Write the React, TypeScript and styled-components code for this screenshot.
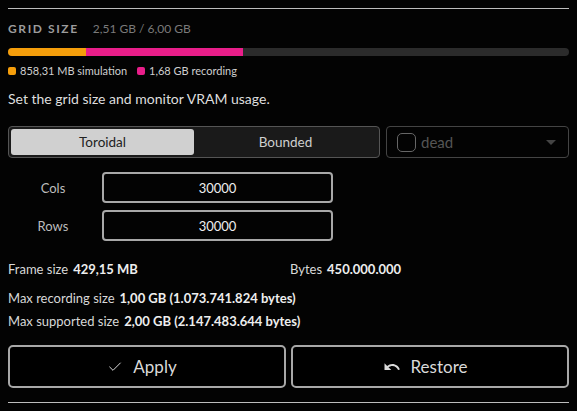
import styled, { createGlobalStyle } from "styled-components";
import { Check } from "lucide-react";
import { MdUndo } from "react-icons/md";

const Global = createGlobalStyle`
  html, body {
    margin: 0;
    background: #030303;
    font-family: "Lato", "Noto Sans", sans-serif;
    color: #dcdcdc;
  }
`;

const Panel = styled.div`
  width: 561px;
  padding: 8px 8px 0;
`;

const Rule = styled.div`
  height: 1px;
  background: #bdbdbd;
`;

const Header = styled.div`
  display: flex;
  align-items: baseline;
  gap: 14px;
  margin-top: 12px;
  height: 14px;
`;

const Title = styled.span`
  font-size: 12px;
  font-weight: 700;
  letter-spacing: 1.6px;
  color: #9c9c9c;
`;

const Usage = styled.span`
  font-size: 12px;
  color: #7a7a7a;
`;

const Bar = styled.div`
  display: flex;
  height: 8px;
  margin-top: 13px;
  border-radius: 4px;
  overflow: hidden;
  background: #2b2b2b;
`;

const Segment = styled.div<{ $color: string; $w: number }>`
  width: ${(p) => p.$w}px;
  background: ${(p) => p.$color};
`;

const Legend = styled.div`
  display: flex;
  gap: 10px;
  margin-top: 8px;
  font-size: 11px;
  color: #cfcfcf;
`;

const LegendItem = styled.span`
  display: flex;
  align-items: center;
  gap: 4px;
`;

const Swatch = styled.span<{ $color: string }>`
  width: 8px;
  height: 8px;
  border-radius: 2px;
  background: ${(p) => p.$color};
`;

const Description = styled.p`
  margin: 13px 0 0;
  font-size: 14px;
  color: #dedede;
`;

const ModeRow = styled.div`
  display: flex;
  gap: 6px;
  margin-top: 19px;
`;

const Segmented = styled.div`
  display: flex;
  width: 366px;
  height: 26px;
  padding: 2px;
  border: 1px solid #555;
  border-radius: 4px;
  background: #1a1a1a;
`;

const SegButton = styled.div<{ $active?: boolean }>`
  flex: 1;
  display: flex;
  align-items: center;
  justify-content: center;
  font-size: 13.5px;
  border-radius: 3px;
  background: ${(p) => (p.$active ? "#d0d0d0" : "transparent")};
  color: ${(p) => (p.$active ? "#222" : "#cfcfcf")};
`;

const Select = styled.div`
  flex: 1;
  display: flex;
  align-items: center;
  gap: 5px;
  padding: 0 10px;
  border: 1px solid #444;
  border-radius: 4px;
`;

const Box = styled.span`
  width: 17px;
  height: 17px;
  border: 1px solid #666;
  border-radius: 5px;
`;

const Placeholder = styled.span`
  flex: 1;
  font-size: 15px;
  color: #555;
`;

const Caret = styled.span`
  width: 0;
  height: 0;
  border-left: 5px solid transparent;
  border-right: 5px solid transparent;
  border-top: 5px solid #444;
  margin-right: 2px;
`;

const Fields = styled.div`
  display: grid;
  grid-template-columns: 90px 231px;
  column-gap: 4px;
  row-gap: 7px;
  margin-top: 14px;
  align-items: center;
`;

const FieldLabel = styled.span`
  text-align: center;
  font-size: 13px;
  color: #bdbdbd;
`;

const Input = styled.div`
  height: 27px;
  display: flex;
  align-items: center;
  justify-content: center;
  border: 2px solid #a8a8a8;
  border-radius: 4px;
  font-size: 13px;
  color: #efefef;
`;

const Stats = styled.div`
  display: grid;
  grid-template-columns: 282px 1fr;
  margin-top: 20px;
  font-size: 13px;
`;

const Info = styled.div<{ $gap?: number }>`
  margin-top: ${(p) => p.$gap ?? 0}px;
  font-size: 13px;
  color: #d8d8d8;
  white-space: nowrap;
`;

const Value = styled.b`
  font-weight: 700;
  color: #eee;
  margin-left: 5px;
`;

const Actions = styled.div`
  display: grid;
  grid-template-columns: 1fr 1fr;
  gap: 5px;
  margin-top: 16px;
`;

const ActionButton = styled.button`
  height: 43px;
  display: flex;
  align-items: center;
  justify-content: center;
  gap: 10px;
  padding: 0 10px 0 0;
  background: #000;
  border: 2px solid #a8a8a8;
  border-radius: 5px;
  color: #dadada;
  font-family: inherit;
  font-size: 17px;
`;

const BottomRule = styled(Rule)`
  margin-top: 14px;
`;

export default function App() {
  return (
    <Panel>
      <Global />
      <Rule />
      <Header>
        <Title>GRID SIZE</Title>
        <Usage>2,51 GB / 6,00 GB</Usage>
      </Header>
      <Bar>
        <Segment $color="#f59e0b" $w={78} />
        <Segment $color="#e91e8a" $w={157} />
      </Bar>
      <Legend>
        <LegendItem>
          <Swatch $color="#f59e0b" />
          858,31 MB simulation
        </LegendItem>
        <LegendItem>
          <Swatch $color="#e91e8a" />
          1,68 GB recording
        </LegendItem>
      </Legend>
      <Description>Set the grid size and monitor VRAM usage.</Description>
      <ModeRow>
        <Segmented>
          <SegButton $active>Toroidal</SegButton>
          <SegButton>Bounded</SegButton>
        </Segmented>
        <Select>
          <Box />
          <Placeholder>dead</Placeholder>
          <Caret />
        </Select>
      </ModeRow>
      <Fields>
        <FieldLabel>Cols</FieldLabel>
        <Input>30000</Input>
        <FieldLabel>Rows</FieldLabel>
        <Input>30000</Input>
      </Fields>
      <Stats>
        <Info>
          Frame size<Value>429,15 MB</Value>
        </Info>
        <Info>
          Bytes<Value>450.000.000</Value>
        </Info>
      </Stats>
      <Info $gap={13}>
        Max recording size<Value>1,00 GB (1.073.741.824 bytes)</Value>
      </Info>
      <Info $gap={7}>
        Max supported size<Value>2,00 GB (2.147.483.644 bytes)</Value>
      </Info>
      <Actions>
        <ActionButton>
          <Check size={16} strokeWidth={1.5} />
          Apply
        </ActionButton>
        <ActionButton>
          <MdUndo size={18} />
          Restore
        </ActionButton>
      </Actions>
      <BottomRule />
    </Panel>
  );
}
